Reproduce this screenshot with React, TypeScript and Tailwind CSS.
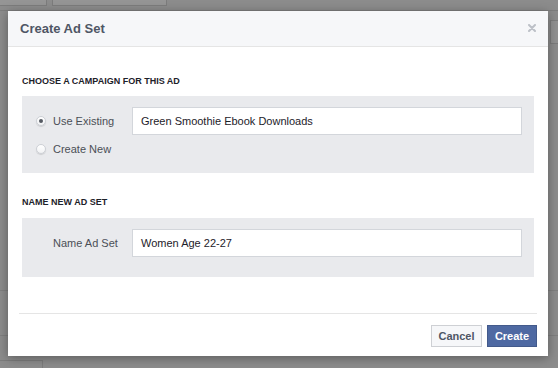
function Radio({ checked }: { checked?: boolean }) {
  return (
    <span className="flex h-[10px] w-[10px] items-center justify-center rounded-full border border-[#cdd0d5] bg-gradient-to-b from-white to-[#f1f2f4] shadow-[0_1px_1px_rgba(0,0,0,0.12)]">
      {checked && <span className="h-[4px] w-[4px] rounded-full bg-[#555a62]" />}
    </span>
  );
}

function TextInput({ value }: { value: string }) {
  return (
    <div className="flex h-[28px] flex-1 items-center border border-[#d3d6db] bg-white pl-[8px] text-[11px] text-[#1d2129]">
      {value}
    </div>
  );
}

function Backdrop() {
  return (
    <div className="flex h-full w-full flex-col bg-[#8c8c8c]">
      <div className="flex h-[6px]">
        <div className="w-[47px] border-b border-r border-[#7c7c7c] bg-[#959595]" />
        <div className="ml-[5px] w-[115px] border-b border-l border-r border-[#7c7c7c] bg-[#959595]" />
      </div>
      <div className="mt-[4px] h-px bg-[#7d7d7d]" />
      <div className="mt-[9px] flex h-[25px] justify-end">
        <div className="w-[8px] border-b border-l border-t border-[#7c7c7c] bg-[#919191]" />
      </div>
      <div className="mt-[246px] h-px bg-[#7f7f7f]" />
      <div className="mt-[44px] h-px bg-[#7f7f7f]" />
      <div className="mt-[24px] flex h-[8px]">
        <div className="w-[43px] border-r border-t border-[#7c7c7c]" />
      </div>
    </div>
  );
}

export default function App() {
  return (
    <div className="relative h-[368px] w-[558px] overflow-hidden font-['Liberation_Sans',Arial,sans-serif]">
      <Backdrop />

      <div className="absolute left-[8px] top-[11px] flex w-[540px] flex-col bg-white shadow-[0_2px_10px_rgba(0,0,0,0.35)]">
        {/* header */}
        <div className="flex h-[36px] items-center justify-between border-b border-[#e5e5e5] bg-[#f6f7f9] pl-[12px] pr-[12px]">
          <span className="text-[13px] font-bold text-[#4e5665]">Create Ad Set</span>
          <svg width="8" height="8" viewBox="0 0 8 8" className="mt-[-1px]">
            <path d="M1 1L7 7M7 1L1 7" stroke="#bcc0c7" strokeWidth="2" strokeLinecap="round" />
          </svg>
        </div>

        {/* body */}
        <div className="flex flex-col px-[14px] pb-[36px] pt-[28px]">
          <div className="text-[9px] font-bold leading-[12px] text-[#1d2129]">
            CHOOSE A CAMPAIGN FOR THIS AD
          </div>
          <div className="mt-[9px] flex h-[77px] flex-col bg-[#e9eaed] pb-[15px] pl-[14px] pr-[12px] pt-[11px]">
            <div className="flex h-[28px] items-center">
              <div className="flex w-[96px] items-center gap-[7px] text-[11px] text-[#4b4f56]">
                <Radio checked />
                <span>Use Existing</span>
              </div>
              <TextInput value="Green Smoothie Ebook Downloads" />
            </div>
            <div className="mt-[5px] flex h-[18px] items-center gap-[7px] text-[11px] text-[#4b4f56]">
              <Radio />
              <span>Create New</span>
            </div>
          </div>

          <div className="mt-[23px] text-[9px] font-bold leading-[12px] text-[#1d2129]">
            NAME NEW AD SET
          </div>
          <div className="mt-[10px] flex h-[59px] items-start bg-[#e9eaed] pl-[14px] pr-[12px] pt-[11px]">
            <div className="flex h-[28px] w-full items-center">
              <div className="w-[96px] pl-[17px] text-[11px] text-[#4b4f56]">Name Ad Set</div>
              <TextInput value="Women Age 22-27" />
            </div>
          </div>
        </div>

        {/* footer */}
        <div className="mx-[11px] flex justify-end gap-[5px] border-t border-[#e5e5e5] pb-[9px] pt-[11px]">
          <button className="flex h-[22px] w-[51px] items-center justify-center border border-[#ced0d4] bg-[#f6f7f9] text-[11px] font-bold text-[#4e5665]">
            Cancel
          </button>
          <button className="flex h-[22px] w-[50px] items-center justify-center border border-[#435a8b] bg-[#4e69a2] text-[11px] font-bold text-white">
            Create
          </button>
        </div>
      </div>
    </div>
  );
}
